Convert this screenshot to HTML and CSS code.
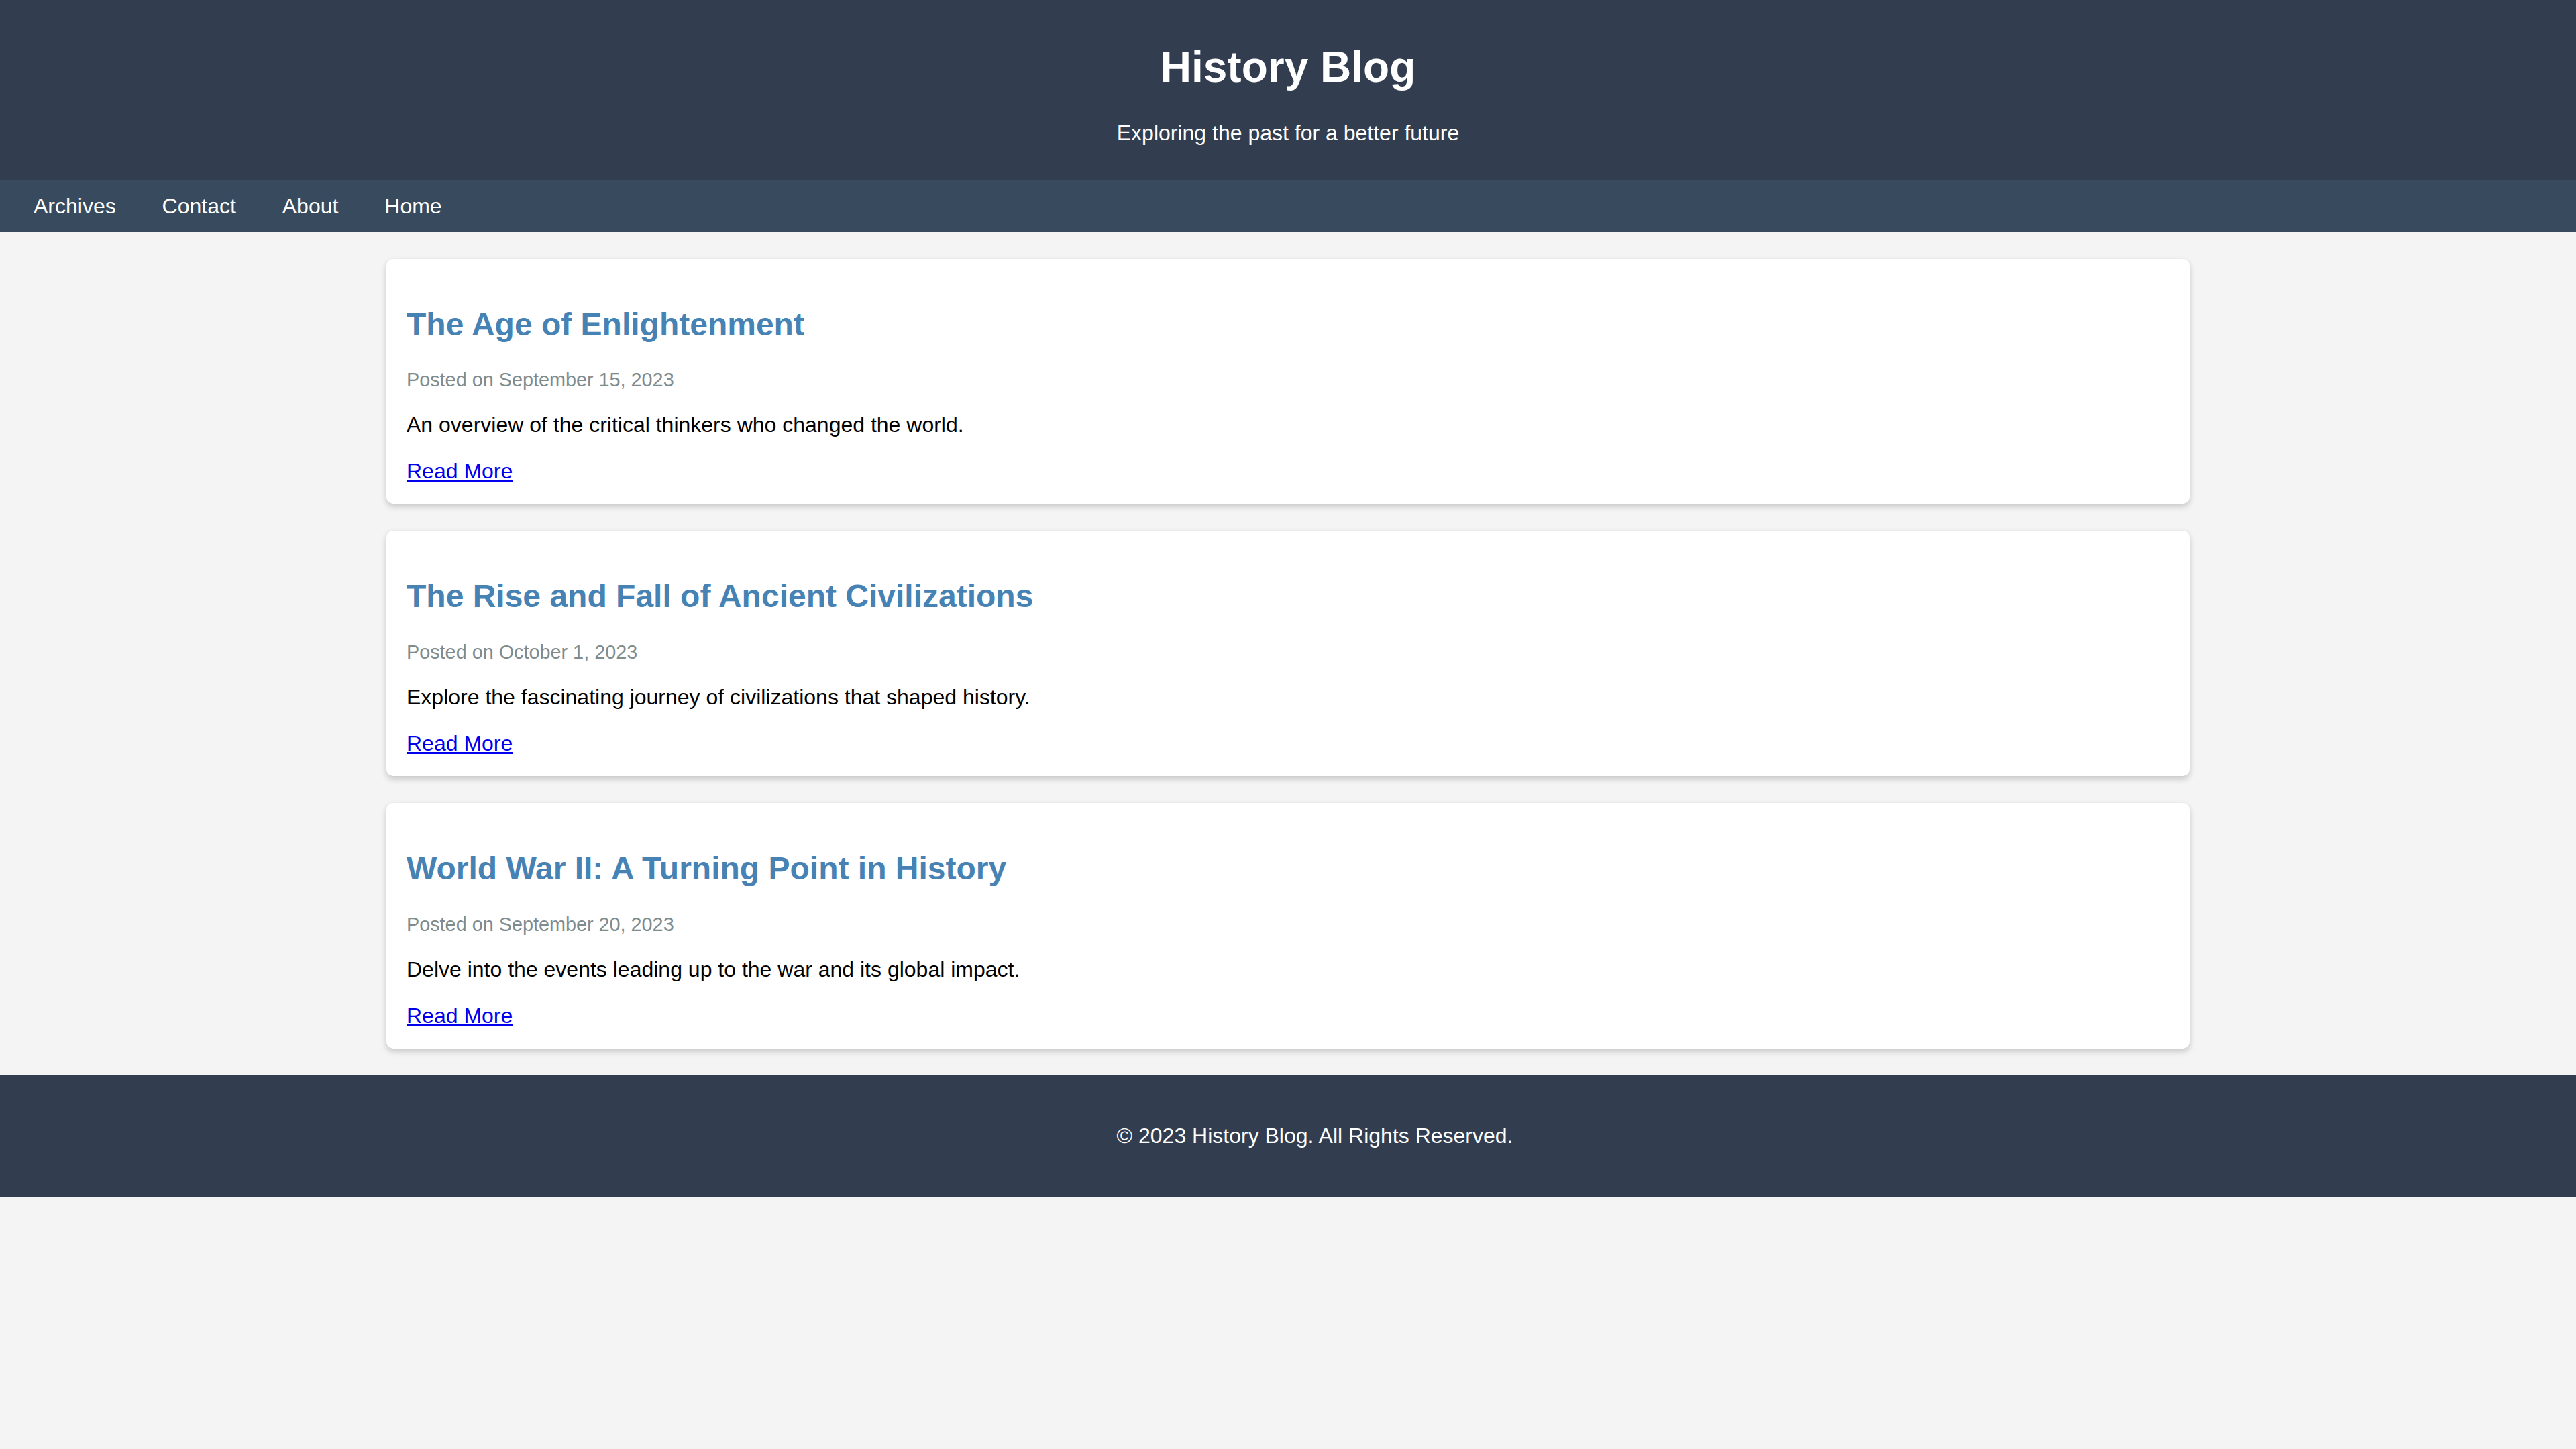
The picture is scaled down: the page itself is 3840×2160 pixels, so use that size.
FILE: index.html
```html
<!DOCTYPE html>
<html lang="en">
<head>
<meta charset="utf-8">
<title>History Blog</title>
<link rel="stylesheet" href="styles.css">
</head>
<body>
<header class="site-header">
  <h1 class="site-title">History Blog</h1>
  <p class="site-tagline">Exploring the past for a better future</p>
</header>
<nav class="site-nav">
  <a href="#" class="nav-link">Archives</a>
  <a href="#" class="nav-link">Contact</a>
  <a href="#" class="nav-link">About</a>
  <a href="#" class="nav-link">Home</a>
</nav>
<main class="content">
  <article class="post">
    <h2 class="post-title">The Age of Enlightenment</h2>
    <p class="post-meta">Posted on September 15, 2023</p>
    <p class="post-excerpt">An overview of the critical thinkers who changed the world.</p>
    <a href="#" class="read-more">Read More</a>
  </article>
  <article class="post">
    <h2 class="post-title">The Rise and Fall of Ancient Civilizations</h2>
    <p class="post-meta">Posted on October 1, 2023</p>
    <p class="post-excerpt">Explore the fascinating journey of civilizations that shaped history.</p>
    <a href="#" class="read-more">Read More</a>
  </article>
  <article class="post">
    <h2 class="post-title">World War II: A Turning Point in History</h2>
    <p class="post-meta">Posted on September 20, 2023</p>
    <p class="post-excerpt">Delve into the events leading up to the war and its global impact.</p>
    <a href="#" class="read-more">Read More</a>
  </article>
</main>
<footer class="site-footer">
  <p class="footer-text">&copy; 2023 History Blog. All Rights Reserved.</p>
</footer>
</body>
</html>
```
FILE: styles.css
```css
html, body {
  margin: 0;
  padding: 0;
}

body {
  font-family: "Liberation Sans", Arial, Helvetica, sans-serif;
  font-size: 32px;
  background: #f4f4f4;
  color: #000;
}

.site-header {
  background: #323e50;
  color: #fff;
  text-align: center;
  padding: 20px 0;
}

.site-title {
  font-size: 2em;
  margin: 0.67em 0;
}

.site-tagline {
  margin: 1em 0;
}

.site-nav {
  background: #384a5e;
  padding: 20px;
}

.nav-link {
  color: #fff;
  text-decoration: none;
  padding: 0 30px;
}

.content {
  width: 70%;
  margin: 40px auto;
}

.post {
  background: #fff;
  padding: 30px;
  margin-bottom: 40px;
  border-radius: 10px;
  box-shadow: 0 4px 10px rgba(0, 0, 0, 0.2);
}

.post-title {
  color: #4682b4;
  font-size: 1.5em;
  margin: 0.83em 0;
}

.post-meta {
  color: #7f8c8d;
  font-size: 0.9em;
}

.post-excerpt {
  margin: 1em 0;
}

.read-more {
  color: #0000ee;
}

.site-footer {
  background: #323e50;
  color: #fff;
  text-align: center;
  padding: 40px 0 40px 80px;
}

.footer-text {
  margin: 1em 0;
}
```
